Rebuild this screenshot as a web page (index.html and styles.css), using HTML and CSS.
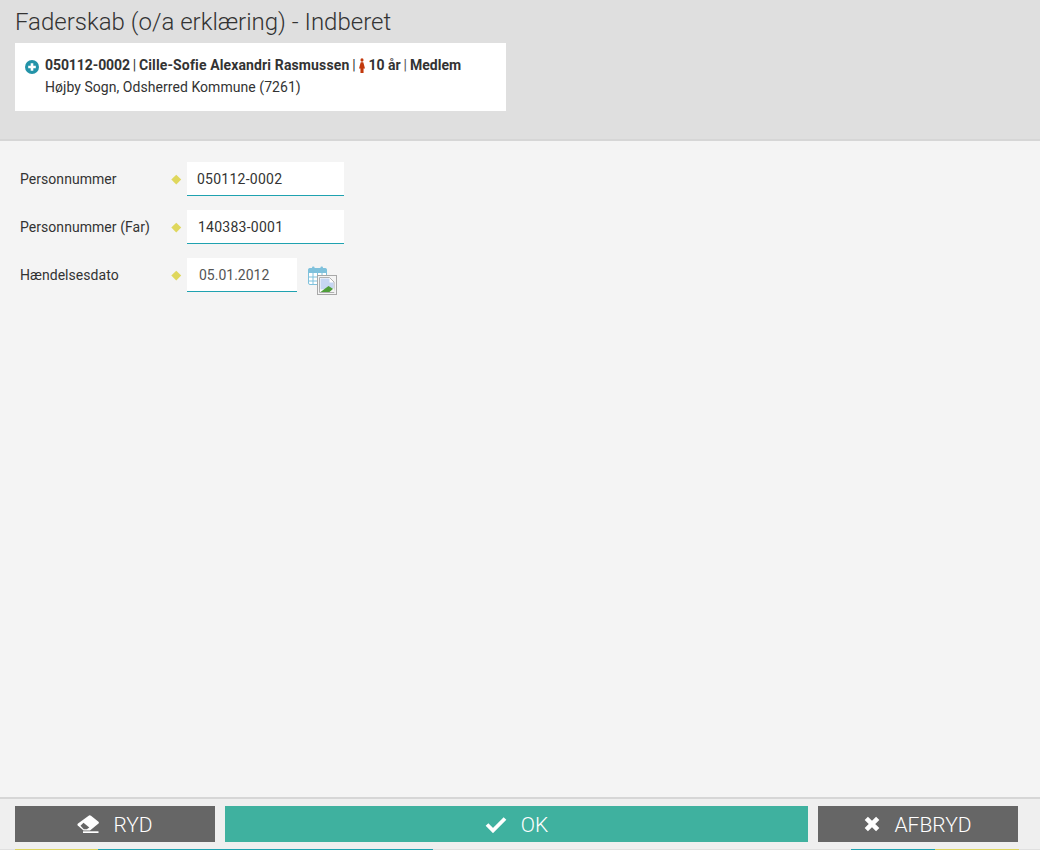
FILE: index.html
```html
<!DOCTYPE html>
<html lang="da">
<head>
<meta charset="utf-8">
<title>Faderskab</title>
<link rel="stylesheet" href="styles.css">
</head>
<body>
<div class="page">
  <header class="head">
    <h1 class="title">Faderskab (o/a erklæring) - Indberet</h1>
    <div class="card">
      <svg class="plus" viewBox="0 0 14 14" width="14" height="14"><circle cx="7" cy="7" r="7" fill="#2393a8"/><path d="M7 3.2v7.6M3.2 7h7.6" stroke="#fff" stroke-width="2.6"/></svg>
      <div class="card-text">
        <div class="line1"><b class="num">050112-0002</b><span class="sep">|</span><b class="name">Cille-Sofie Alexandri Rasmussen</b><span class="sep">|</span><svg class="person" viewBox="0 0 7 15" width="6" height="15" preserveAspectRatio="none"><circle cx="3.5" cy="2" r="1.8" fill="#c2380c"/><path d="M2 4.3h3L7 10.500H5.300V15H1.700V10.500H0z" fill="#c2380c"/></svg><b>10 år</b><span class="sep thin">|</span><b>Medlem</b></div>
        <div class="line2">Højby Sogn, Odsherred Kommune (7261)</div>
      </div>
    </div>
  </header>
  <main class="form">
    <div class="row">
      <label class="lbl">Personnummer</label><span class="dia"></span>
      <span class="field wide">050112-0002</span>
    </div>
    <div class="row">
      <label class="lbl">Personnummer (Far)</label><span class="dia"></span>
      <span class="field wide far">140383-0001</span>
    </div>
    <div class="row">
      <label class="lbl">Hændelsesdato</label><span class="dia"></span>
      <span class="field date">05.01.2012</span>
      <span class="cal">
        <svg class="cal-icon" viewBox="0 0 20 20" width="20" height="20"><rect x="0.500" y="2.500" width="18" height="16" rx="1.500" fill="#fff" stroke="#7fc1dc"/><rect x="0.500" y="2.500" width="18" height="4.500" fill="#7fc1dc"/><rect x="4" y="0.500" width="2.500" height="5" rx="1" fill="#7fc1dc"/><rect x="12.500" y="0.500" width="2.500" height="5" rx="1" fill="#7fc1dc"/><path d="M1 11h17M1 15h17M5 7v11M9.500 7v11M14 7v11" stroke="#7fc1dc"/></svg>
        <svg class="broken" viewBox="0 0 20 20" width="20" height="20"><rect x="0.500" y="0.500" width="19" height="19" fill="#f4f4f4" stroke="#a8a8a8"/><path d="M2.500 2.500h10l4.500 4.500v10.500h-14.500z" fill="#fff" stroke="#b0b0b0"/><path d="M3.500 3.500h9v4h4v6l-13 1z" fill="#c6d6f3"/><path d="M3.500 17l8-6 5.500 3.500v2.500z" fill="#4f9e3a"/><path d="M12.500 17l4.500-4 1 4z" fill="#f4f4f4"/></svg>
      </span>
    </div>
  </main>
  <footer class="foot">
    <div class="actions">
      <button class="btn grey side" type="button">
        <svg class="ico" viewBox="0 0 22 18" width="22" height="18"><path d="M12 0.500Q13 0 14 0.800L21.500 6.800Q22.300 7.600 21.500 8.500L13 15.500H6.500L0.800 10.500Q0 9.500 1 8.500z" fill="#fff"/><path d="M6.500 7.800 12.300 12.600 9.800 14.300H6.800L3.500 10.800z" fill="#666"/><rect x="6" y="16.300" width="15.500" height="1.700" fill="#fff"/></svg>
        <span class="btn-text">RYD</span>
      </button>
      <button class="btn teal" type="button">
        <svg class="ico" viewBox="0 0 22 17" width="22" height="17"><path d="M2 8.500 8 14.500 20 2.500" fill="none" stroke="#fff" stroke-width="3.800"/></svg>
        <span class="btn-text">OK</span>
      </button>
      <button class="btn grey side" type="button">
        <svg class="ico small" viewBox="0 0 16 16" width="16" height="16"><path d="M2.300 2.300 13.700 13.700M13.700 2.300 2.300 13.700" fill="none" stroke="#fff" stroke-width="4.600"/></svg>
        <span class="btn-text">AFBRYD</span>
      </button>
    </div>
    <div class="strip">
      <span class="seg-l"><i class="y1"></i><i class="t1"></i></span>
      <span class="seg-r"><i class="t2"></i><i class="y2"></i></span>
    </div>
  </footer>
</div>
</body>
</html>
```
FILE: styles.css
```css
* { box-sizing: border-box; }
html, body { margin: 0; height: 100%; overflow: hidden; }
body { font-family: Roboto, "Liberation Sans", sans-serif; color: #333; background: #f4f4f4; }
.page { display: flex; flex-direction: column; height: 850px; }

.head { height: 141px; padding: 7px 15px 0; background: #dfdfdf; border-bottom: 2px solid #d6d6d6; flex: none; }
.title { margin: 0; font-size: 24px; line-height: 30px; font-weight: 300; color: #333; }
.card { display: flex; width: 491px; height: 68px; margin-top: 6px; padding: 11px 10px; background: #fff; }
.plus { margin-top: 6px; flex: none; }
.card-text { margin-left: 6px; font-size: 14px; line-height: 22px; }
.line1 { display: flex; align-items: center; height: 22px; }
.line1 b { font-weight: 700; }
.line1 .num { letter-spacing: -0.08px; }
.line1 .name { letter-spacing: 0.13px; }
.sep { margin: 0 2.800px; font-weight: 400; }
.sep.thin { color: #555; margin: 0 3px; }
.person { margin: 0 3px 0 1px; }
.line2 { color: #333; letter-spacing: 0.05px; }

.form { flex: 1; padding: 21px 0 0 20px; }
.row { display: flex; align-items: flex-start; height: 34px; margin-bottom: 14px; }
.lbl { width: 151px; font-size: 14px; line-height: 34px; color: #333; letter-spacing: 0.05px; }
.dia { width: 6.500px; height: 6.500px; margin: 13.500px 7.700px 0 1.800px; background: #dfd75c; transform: rotate(45deg); }
.field { height: 34px; background: #fff; border-bottom: 1px solid #1fa2b0; font-size: 14px; line-height: 34px; color: #333; }
.field.wide { width: 157px; padding-left: 10px; letter-spacing: 0.25px; }
.field.far { padding-left: 11px; }
.field.date { width: 110px; padding-left: 12px; color: #555; }
.cal { display: flex; margin: 8px 0 0 11px; align-items: flex-start; }
.cal-icon { flex: none; }
.broken { flex: none; margin: 9px 0 0 -11px; }

.foot { flex: none; height: 53px; background: #efefef; border-top: 2px solid #d6d6d6; display: flex; flex-direction: column; }
.actions { display: flex; gap: 10px; padding: 7px 22px 0 15px; height: 50px; }
.btn { display: flex; align-items: center; justify-content: center; gap: 14px; height: 36px; border: 0; padding: 0; color: #fff; font: 300 21px/30px Roboto, "Liberation Sans", sans-serif; }
.btn-text { padding-top: 2px; }
.btn.grey { background: #666; }
.btn.side { width: 200px; flex: none; }
.btn.teal { background: #3fb19f; flex: 1; }
.ico { flex: none; }
.strip { display: flex; justify-content: space-between; height: 1px; padding: 0 21px 0 15px; background: #e0e0e0; }
.seg-l, .seg-r { display: flex; height: 1px; }
.strip i { display: block; height: 1px; }
.y1 { width: 83px; background: #ddd55f; }
.t1 { width: 335px; background: #1fa2b0; }
.t2 { width: 84px; background: #1fa2b0; }
.y2 { width: 84px; background: #ddd55f; }
```
